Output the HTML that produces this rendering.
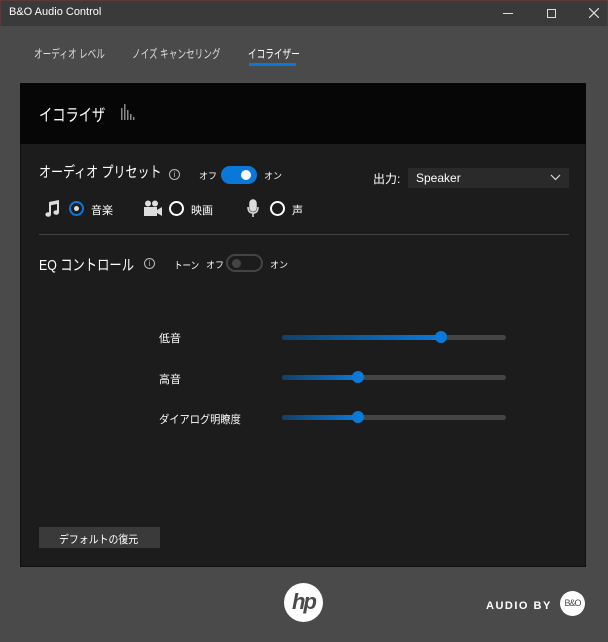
<!DOCTYPE html><html><head><meta charset="utf-8"><style>
*{margin:0;padding:0;box-sizing:border-box}
body{width:608px;height:642px;background:#4a4a4a;font-family:"Liberation Sans","Noto Sans CJK JP",sans-serif;color:#fff;position:relative;overflow:hidden}
.a{position:absolute;white-space:nowrap;transform-origin:0 0}
.tb{left:0;top:0;width:608px;height:26px;background:#3a3a3a;border:1px solid #5a3a3a;border-bottom:none}
.tr{height:5px;border-radius:3px;background:#444;width:224px;left:282px}
.fill{position:absolute;left:0;top:0;height:5px;border-radius:3px;background:linear-gradient(90deg,#12406a,#0a78d8)}
.th{width:12px;height:12px;border-radius:6px;background:#0a7ad8}
.rad{width:15px;height:15px;border-radius:8px;border:2px solid #fff}
.info{width:11px;height:11px;border-radius:6px;border:1px solid #bbb;font-size:8px;text-align:center;line-height:9px;color:#bbb}
</style></head><body>
<div class="a tb"></div>
<div class="a" style="left:9px;top:6px;font-size:11px">B&amp;O Audio Control</div>
<div class="a" style="left:503px;top:13px;width:10px;height:1px;background:#ddd"></div>
<div class="a" style="left:547px;top:9px;width:9px;height:9px;border:1px solid #ddd"></div>
<svg class="a" style="left:589px;top:8px" width="10" height="10"><path d="M0 0L10 10M10 0L0 10" stroke="#ddd" stroke-width="1.2"/></svg>
<div class="a" style="left:34px;top:45px;font-size:12px;color:#ddd;transform:scaleX(.72)">オーディオ レベル</div>
<div class="a" style="left:132px;top:45px;font-size:12px;color:#ddd;transform:scaleX(.72)">ノイズ キャンセリング</div>
<div class="a" style="left:248px;top:45px;font-size:12px;transform:scaleX(.72)">イコライザー</div>
<div class="a" style="left:249px;top:63px;width:47px;height:3px;background:#0a78d8"></div>
<div class="a" style="left:20px;top:83px;width:566px;height:484px;background:#1c1c1c;border:1px solid #111"></div>
<div class="a" style="left:20px;top:83px;width:566px;height:61px;background:#060606"></div>
<div class="a" style="left:39px;top:101px;font-size:17px;transform:scaleX(.78)">イコライザ</div>
<svg class="a" style="left:121px;top:104px" width="16" height="16" fill="#888"><rect x="0" y="4" width="1.5" height="12"/><rect x="3" y="0" width="1.5" height="16"/><rect x="6" y="6" width="1.5" height="10"/><rect x="9" y="10" width="1.5" height="6"/><rect x="12" y="13" width="1.5" height="3"/></svg>
<div class="a" style="left:39px;top:161px;font-size:15px;transform:scaleX(.8)">オーディオ プリセット</div>
<div class="a info" style="left:169px;top:169px">i</div>
<div class="a" style="left:199px;top:169px;font-size:9px">オフ</div>
<div class="a" style="left:221px;top:166px;width:36px;height:18px;border-radius:9px;background:#0a78d8"></div>
<div class="a" style="left:241px;top:170px;width:10px;height:10px;border-radius:5px;background:#fff"></div>
<div class="a" style="left:264px;top:169px;font-size:9px">オン</div>
<div class="a" style="left:373px;top:170px;font-size:12px">出力:</div>
<div class="a" style="left:408px;top:168px;width:161px;height:20px;background:#2a2a2a"></div>
<div class="a" style="left:416px;top:171px;font-size:12px">Speaker</div>
<svg class="a" style="left:550px;top:174px" width="11" height="7"><path d="M1 1L5.5 5.5L10 1" stroke="#ddd" fill="none" stroke-width="1.2"/></svg>
<svg class="a" style="left:44px;top:200px" width="16" height="17" fill="#ddd"><path d="M5 2L15 0V12.5A2.8 2.3 0 1 1 13 10.3V4L7 5.2V14.5A2.8 2.3 0 1 1 5 12.3Z"/></svg>
<div class="a rad" style="left:69px;top:201px;border-color:#0a78d8"></div>
<div class="a" style="left:74px;top:206px;width:5px;height:5px;border-radius:3px;background:#ddd"></div>
<div class="a" style="left:91px;top:202px;font-size:11px">音楽</div>
<svg class="a" style="left:144px;top:200px" width="18" height="17" fill="#ddd"><circle cx="4" cy="3.5" r="3"/><circle cx="11" cy="3.5" r="3"/><rect x="0" y="7" width="13" height="9"/><path d="M13 10L18 7V16L13 13Z"/></svg>
<div class="a rad" style="left:169px;top:201px"></div>
<div class="a" style="left:191px;top:202px;font-size:11px">映画</div>
<svg class="a" style="left:247px;top:199px" width="12" height="19" fill="none" stroke="#ddd" stroke-width="1.5"><rect x="3" y="1" width="6" height="11" rx="3" fill="#ddd"/><path d="M1 8Q1 14 6 14Q11 14 11 8M6 14V18"/></svg>
<div class="a rad" style="left:270px;top:201px"></div>
<div class="a" style="left:292px;top:202px;font-size:11px">声</div>
<div class="a" style="left:39px;top:234px;width:530px;height:1px;background:#444"></div>
<div class="a" style="left:39px;top:254px;font-size:15px;transform:scaleX(.82)">EQ コントロール</div>
<div class="a info" style="left:144px;top:258px">i</div>
<div class="a" style="left:174px;top:257px;font-size:10px;transform:scaleX(.85)">トーン</div>
<div class="a" style="left:206px;top:258px;font-size:9px">オフ</div>
<div class="a" style="left:226px;top:254px;width:37px;height:18px;border-radius:9px;border:2px solid #444"></div>
<div class="a" style="left:232px;top:259px;width:9px;height:9px;border-radius:5px;background:#444"></div>
<div class="a" style="left:270px;top:258px;font-size:9px">オン</div>
<div class="a" style="left:159px;top:330px;font-size:11px">低音</div>
<div class="a tr" style="top:335px"><div class="fill" style="width:159px"></div></div>
<div class="a th" style="left:435px;top:331px"></div>
<div class="a" style="left:159px;top:371px;font-size:11px">高音</div>
<div class="a tr" style="top:375px"><div class="fill" style="width:76px"></div></div>
<div class="a th" style="left:352px;top:371px"></div>
<div class="a" style="left:159px;top:411px;font-size:11px;transform:scaleX(.93)">ダイアログ明瞭度</div>
<div class="a tr" style="top:415px"><div class="fill" style="width:76px"></div></div>
<div class="a th" style="left:352px;top:411px"></div>
<div class="a" style="left:39px;top:527px;width:121px;height:21px;background:#3a3a3a"></div>
<div class="a" style="left:59px;top:531px;font-size:11px;transform:scaleX(.9)">デフォルトの復元</div>
<div class="a" style="left:284px;top:583px;width:39px;height:39px;border-radius:20px;background:#fff;color:#4a4a4a;font-size:22px;font-weight:bold;font-style:italic;text-align:center;line-height:37px;letter-spacing:-2px">hp</div>
<div class="a" style="left:486px;top:600px;font-size:11px;font-weight:bold;letter-spacing:1.5px">AUDIO BY</div>
<div class="a" style="left:560px;top:591px;width:25px;height:25px;border-radius:13px;background:#fff;color:#4a4a4a;font-size:9px;text-align:center;line-height:25px;letter-spacing:-1px">B&amp;O</div>
</body></html>
